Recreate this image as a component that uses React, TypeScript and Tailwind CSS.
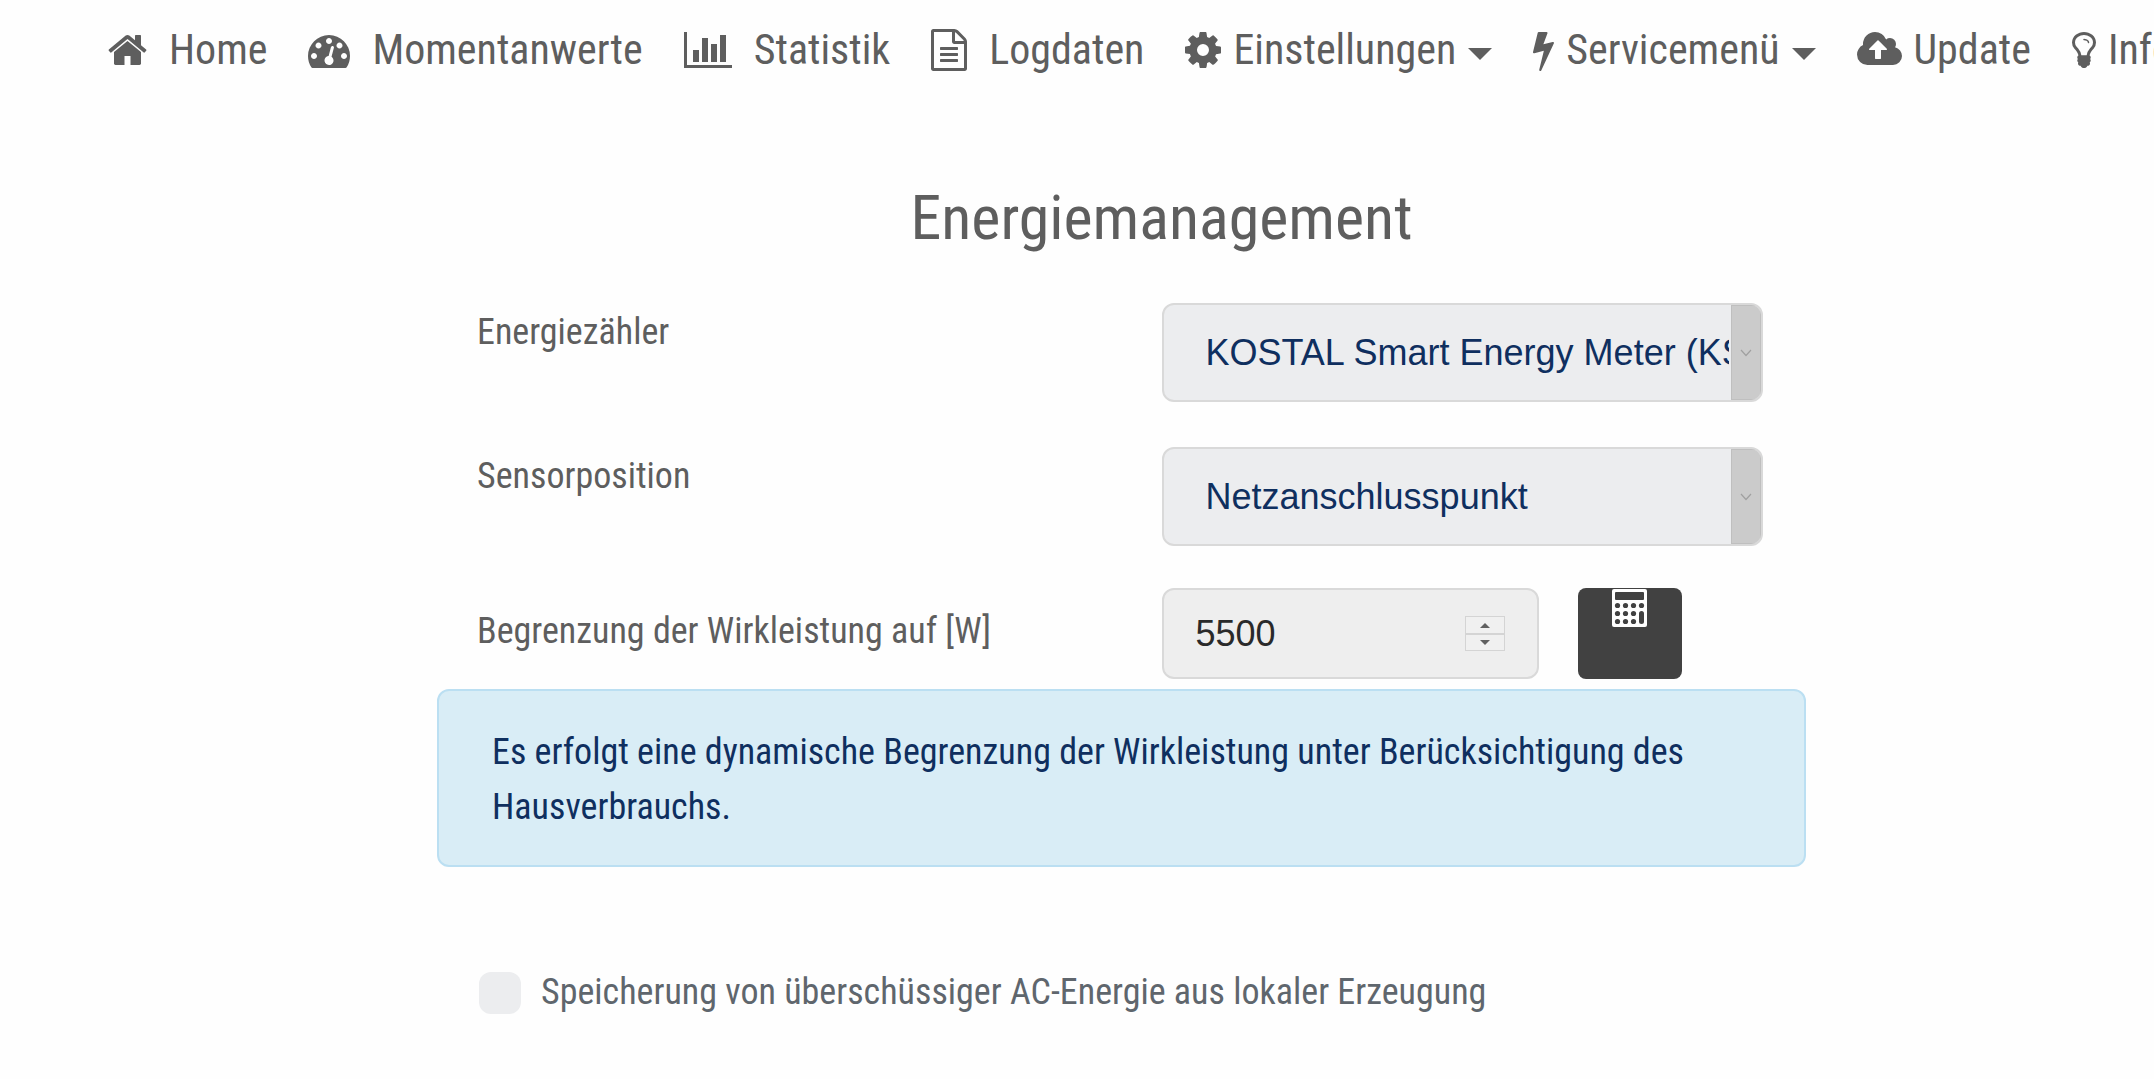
import { ReactNode } from 'react';

// Font Awesome 4 outlines, 1792 units per em
const icons = {
  home: {
    box: '64 0 1664 1792',
    className: 'h-[42px] w-[39px]',
    d: 'M1472 992v480q0 26-19 45t-45 19h-384v-384h-256v384h-384q-26 0-45-19t-19-45v-480q0-1 .5-3t.5-3l575-474 575 474q1 2 1 6zm223-69l-62 74q-8 9-21 11h-3q-13 0-21-7l-692-577-692 577q-12 8-24 7-13-2-21-11l-62-74q-8-10-7-23.5t11-21.5l719-599q32-26 76-26t76 26l244 204v-195q0-14 9-23t23-9h192q14 0 23 9t9 23v408l219 182q10 8 11 21.5t-7 23.5z',
  },
  gauge: {
    box: '0 0 1792 1792',
    className: 'size-[42px]',
    d: 'M384 1152q0-53-37.5-90.5t-90.5-37.5-90.5 37.5-37.5 90.5 37.5 90.5 90.5 37.5 90.5-37.5 37.5-90.5zm192-448q0-53-37.5-90.5t-90.5-37.5-90.5 37.5-37.5 90.5 37.5 90.5 90.5 37.5 90.5-37.5 37.5-90.5zm428 481l101-382q6-26-7.5-48.5t-38.5-29.5-48 6.5-30 39.5l-101 382q-60 5-107 43.5t-63 98.5q-20 77 20 146t117 89 146-20 89-117q16-60-6-117t-72-91zm660-33q0-53-37.5-90.5t-90.5-37.5-90.5 37.5-37.5 90.5 37.5 90.5 90.5 37.5 90.5-37.5 37.5-90.5zm-640-640q0-53-37.5-90.5t-90.5-37.5-90.5 37.5-37.5 90.5 37.5 90.5 90.5 37.5 90.5-37.5 37.5-90.5zm448 192q0-53-37.5-90.5t-90.5-37.5-90.5 37.5-37.5 90.5 37.5 90.5 90.5 37.5 90.5-37.5 37.5-90.5zm320 448q0 261-141 483-19 29-54 29h-1402q-35 0-54-29-141-221-141-483 0-182 71-348t191-286 286-191 348-71 348 71 286 191 191 286 71 348z',
  },
  chart: {
    box: '0 0 2048 1792',
    className: 'h-[42px] w-[48px]',
    d: 'M640 896v512h-256v-512h256zm384-512v1024h-256v-1024h256zm1024 1152v128h-2048v-1536h128v1408h1920zm-640-896v768h-256v-768h256zm384-384v1152h-256v-1152h256z',
  },
  file: {
    box: '128 0 1536 1792',
    className: 'h-[42px] w-[36px]',
    d: 'M1596 380q28 28 48 76t20 88v1152q0 40-28 68t-68 28h-1344q-40 0-68-28t-28-68v-1600q0-40 28-68t68-28h896q40 0 88 20t76 48zm-444-244v376h376q-10-29-22-41l-313-313q-12-12-41-22zm384 1528v-1024h-416q-40 0-68-28t-28-68v-416h-768v1536h1280zm-1024-864q0-14 9-23t23-9h704q14 0 23 9t9 23v64q0 14-9 23t-23 9h-704q-14 0-23-9t-9-23v-64zm736 224q14 0 23 9t9 23v64q0 14-9 23t-23 9h-704q-14 0-23-9t-9-23v-64q0-14 9-23t23-9h704zm0 256q14 0 23 9t9 23v64q0 14-9 23t-23 9h-704q-14 0-23-9t-9-23v-64q0-14 9-23t23-9h704z',
  },
  cog: {
    box: '128 0 1536 1792',
    className: 'h-[42px] w-[36px]',
    d: 'M1152 896q0-106-75-181t-181-75-181 75-75 181 75 181 181 75 181-75 75-181zm512-109v222q0 12-8 23t-20 13l-185 28q-19 54-39 91 35 50 107 138 10 12 10 25t-9 23q-27 37-99 108t-94 71q-12 0-26-9l-138-108q-44 23-91 38-16 136-29 186-7 28-36 28h-222q-14 0-24.5-8.5t-11.5-21.5l-28-184q-49-16-90-37l-141 107q-10 9-25 9-14 0-25-11-126-114-165-168-7-10-7-23 0-12 8-23 15-21 51-66.5t54-70.5q-27-50-41-99l-183-27q-13-2-21-12.5t-8-23.5v-222q0-12 8-23t19-13l186-28q14-46 39-92-40-57-107-138-10-12-10-24 0-10 9-23 26-36 98.5-107.5t94.5-71.5q13 0 26 10l138 107q44-23 91-38 16-136 29-186 7-28 36-28h222q14 0 24.5 8.5t11.5 21.5l28 184q49 16 90 37l142-107q9-9 24-9 13 0 25 10 129 119 165 170 7 8 7 22 0 12-8 23-15 21-51 66.5t-54 70.5q26 50 41 98l183 28q13 2 21 12.5t8 23.5z',
  },
  bolt: {
    box: '448 0 896 1792',
    className: 'h-[42px] w-[21px]',
    d: 'M1333 566q18 20 7 44l-540 1157q-13 25-42 25-4 0-14-2-17-5-25.5-19t-4.5-30l197-808-406 101q-4 1-12 1-18 0-31-11-18-15-13-39l201-825q4-14 16-23t28-9h328q19 0 32 12.5t13 29.5q0 8-5 18l-171 463 396-98q8-2 12-2 19 0 34 15z',
  },
  cloud: {
    box: '0 0 1920 1792',
    className: 'h-[42px] w-[45px]',
    d: 'M1280 864q0-14-9-23l-352-352q-9-9-23-9t-23 9l-351 351q-10 12-10 24 0 14 9 23t23 9h224v352q0 13 9.5 22.5t22.5 9.5h192q13 0 22.5-9.5t9.5-22.5v-352h224q13 0 22.5-9.5t9.5-22.5zm640 288q0 159-112.5 271.5t-271.5 112.5h-1088q-185 0-316.5-131.5t-131.5-316.5q0-130 70-240t188-165q-2-30-2-43 0-212 150-362t362-150q156 0 285.5 87t188.5 231q71-62 166-62 106 0 181 75t75 181q0 76-41 138 130 31 213.5 135.5t83.5 238.5z',
  },
  bulb: {
    box: '384 0 1024 1792',
    className: 'h-[42px] w-[24px]',
    d: 'M1120 576q0 13-9.5 22.5t-22.5 9.5-22.5-9.5-9.5-22.5q0-46-54-71t-106-25q-13 0-22.5-9.5t-9.5-22.5 9.5-22.5 22.5-9.5q50 0 99.5 16t87 54 37.5 90zm160 0q0-72-34.5-134t-90-101.5-123-62-136.5-22.5-136.5 22.5-123 62-90 101.5-34.5 134q0 101 68 180 10 11 30.5 33t30.5 33q128 153 141 298h228q13-145 141-298 10-11 30.5-33t30.5-33q68-79 68-180zm128 0q0 155-103 268-45 49-74.5 87t-59.5 95.5-34 107.5q47 28 47 82 0 37-25 64 25 27 25 64 0 52-45 81 13 23 13 47 0 46-31.5 71t-77.5 25q-20 44-60 70t-87 26-87-26-60-70q-46 0-77.5-25t-31.5-71q0-24 13-47-45-29-45-81 0-37 25-64-25-27-25-64 0-54 47-82-4-50-34-107.5t-59.5-95.5-74.5-87q-103-113-103-268 0-99 44.5-184.5t117-142 164-89 186.5-32.5 186.5 32.5 164 89 117 142 44.5 184.5z',
  },
};

const navItems: { icon: keyof typeof icons; label: string; wide?: boolean; menu?: boolean }[] = [
  { icon: 'home', label: 'Home', wide: true },
  { icon: 'gauge', label: 'Momentanwerte', wide: true },
  { icon: 'chart', label: 'Statistik', wide: true },
  { icon: 'file', label: 'Logdaten', wide: true },
  { icon: 'cog', label: 'Einstellungen', menu: true },
  { icon: 'bolt', label: 'Servicemenü', menu: true },
  { icon: 'cloud', label: 'Update' },
  { icon: 'bulb', label: 'Infothek' },
];

const NavIcon = ({ name }: { name: keyof typeof icons }) => (
  <svg viewBox={icons[name].box} className={`${icons[name].className} shrink-0 fill-current`} aria-hidden="true">
    <path d={icons[name].d} />
  </svg>
);

const Calculator = () => (
  <svg viewBox="0 0 35 38" className="h-[38px] w-[35px]" aria-hidden="true">
    <rect width="35" height="38" rx="2" fill="#fff" />
    <g fill="#414141">
      <rect x="3" y="3" width="29" height="8" rx="1" />
      {[5.5, 13.5, 21.5].map((x) =>
        [16.5, 24.5, 32.5].map((y) => <circle key={`${x}-${y}`} cx={x} cy={y} r="2.6" />)
      )}
      <circle cx="29.5" cy="16.5" r="2.6" />
      <rect x="27" y="22" width="5" height="13" rx="2.5" />
    </g>
  </svg>
);

const SelectRow = ({ id, label, children }: { id: string; label: string; children: ReactNode }) => (
  <div className="grid grid-cols-2">
    <label htmlFor={id} className="px-10 pt-0.5 text-[36px] leading-[55px]">
      {label}
    </label>
    <div className="pr-[43px] pl-10">
      <div className="relative h-[99px] overflow-hidden rounded-xl border-2 border-[#d9d9d9] bg-[#ecedef]">
        <select
          id={id}
          className="h-full w-full appearance-none pr-8 pl-[42px] font-['Liberation_Sans',Arial,sans-serif] text-[36px] text-[#0f2f5f]"
        >
          {children}
        </select>
        <span className="pointer-events-none absolute inset-y-0 right-0 flex w-[30px] items-center justify-center border border-[#bfbfbf] bg-[#cbcbcb]">
          <svg viewBox="0 0 12 8" className="h-2 w-3" aria-hidden="true">
            <path d="M1 1l5 5.500 5-5.500" fill="none" stroke="#a0a0a0" strokeWidth="1.200" />
          </svg>
        </span>
      </div>
    </div>
  </div>
);

const App = () => {
  return (
    <div className="min-h-screen overflow-hidden bg-[#fefefe] font-['Roboto_Condensed','Liberation_Sans_Narrow',Roboto,sans-serif] text-[#5e5e5e]">
      {/* Navigation */}
      <nav className="flex gap-[41px] pt-[22px] pl-[108px] text-[42px] leading-[56px] whitespace-nowrap">
        {navItems.map((item) => (
          <a key={item.label} href="#" className={`flex shrink-0 items-center ${item.wide ? 'gap-[22px]' : 'gap-3'}`}>
            <NavIcon name={item.icon} />
            {item.label}
            {item.menu && (
              <svg viewBox="0 0 24 12" className="mt-2 h-3 w-6 fill-current" aria-hidden="true">
                <path d="M0 0h24l-12 12z" />
              </svg>
            )}
          </a>
        ))}
      </nav>

      <main className="mt-[98px] mr-[348px] ml-[437px]">
        <h1 className="pl-20 text-center text-[62px] leading-[84px]">Energiemanagement</h1>

        <form className="mt-[43px]">
          <div className="flex flex-col gap-[45px]">
            <SelectRow id="meter" label="Energiezähler">
              <option>KOSTAL Smart Energy Meter (KSEM)</option>
            </SelectRow>
            <SelectRow id="sensor" label="Sensorposition">
              <option>Netzanschlusspunkt</option>
            </SelectRow>
          </div>

          <div className="mt-[42px] grid grid-cols-2">
            <label htmlFor="limit" className="px-10 pt-4 text-[36px] leading-[55px]">
              Begrenzung der Wirkleistung auf [W]
            </label>
            <div className="flex gap-[39px] pl-10">
              <div className="relative h-[91px] w-[377px]">
                <input
                  id="limit"
                  type="number"
                  defaultValue={5500}
                  className="h-full w-full appearance-none rounded-xl border-2 border-[#d9d9d9] bg-[#eee] pl-8 font-['Liberation_Sans',Arial,sans-serif] text-[36px] text-[#2a2a2a] [appearance:textfield] [&::-webkit-inner-spin-button]:appearance-none"
                />
                <div className="absolute top-7 right-[34px] flex w-10 flex-col">
                  <button type="button" aria-label="Mehr" className="flex h-[18px] items-center justify-center border border-[#d4d4d4] bg-[#f0f0f0]">
                    <svg viewBox="0 0 10 5" className="h-[5px] w-[10px] fill-[#606060]"><path d="M0 5h10l-5-5z" /></svg>
                  </button>
                  <button type="button" aria-label="Weniger" className="flex h-[17px] items-center justify-center border border-[#d4d4d4] bg-[#f0f0f0]">
                    <svg viewBox="0 0 10 5" className="h-[5px] w-[10px] fill-[#606060]"><path d="M0 0h10l-5 5z" /></svg>
                  </button>
                </div>
              </div>
              <button type="button" aria-label="Rechner" className="flex h-[91px] w-[104px] justify-center rounded-lg bg-[#414141] pt-px">
                <Calculator />
              </button>
            </div>
          </div>

          {/* Hint */}
          <div className="mt-[10px] rounded-xl border-2 border-[#bbdff2] bg-[#d9edf6] px-[53px] pt-[34px] pb-[30px] text-[36px] leading-[55px] text-[#0f2f5f]">
            Es erfolgt eine dynamische Begrenzung der Wirkleistung unter Berücksichtigung des Hausverbrauchs.
          </div>

          <label className="mt-[98px] flex items-center gap-5 pl-[42px] text-[36px] leading-[55px] text-[#5f666d]">
            <input type="checkbox" className="size-[42px] shrink-0 appearance-none rounded-xl bg-[#ecedef] checked:bg-[#0f2f5f]" />
            Speicherung von überschüssiger AC-Energie aus lokaler Erzeugung
          </label>
        </form>
      </main>
    </div>
  );
};

export default App;
